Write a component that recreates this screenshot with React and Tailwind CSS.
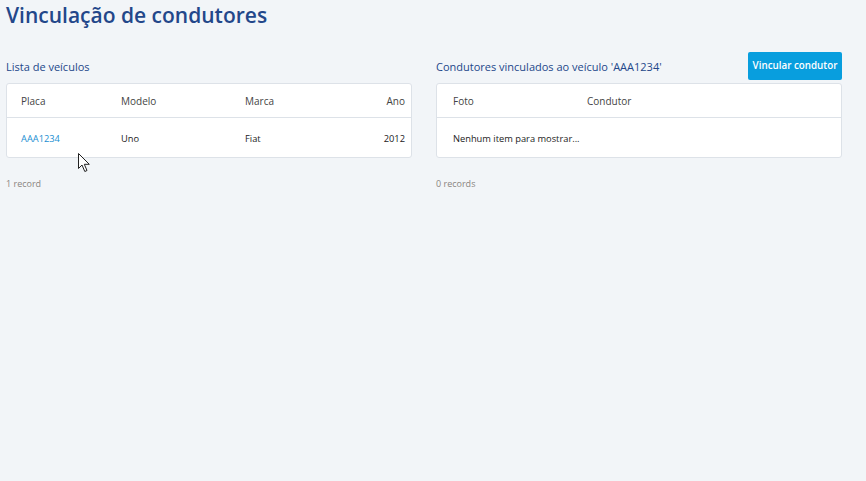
export default function App() {
  return (
    <div
      className="relative min-h-[481px] w-full bg-[#f2f5f8] px-[6px] pt-[1px] text-[#222]"
      style={{ fontFamily: '"Open Sans", "Noto Sans", sans-serif' }}
    >
      <h1 className="text-[21px] font-semibold leading-[28px] text-[#23478a]">
        Vinculação de condutores
      </h1>

      <div className="mt-[23px] mr-[18px] grid grid-cols-2 gap-[24px]">
        {/* Vehicles */}
        <section>
          <div className="flex h-[28px] items-center pt-[2px]">
            <h2 className="text-[11px] text-[#23478a]">Lista de veículos</h2>
          </div>
          <div className="mt-[3px] rounded-[3px] border border-[#dde2e8] bg-white">
            <div className="grid h-[34px] grid-cols-[100px_124px_1fr_auto] items-center border-b border-[#dde2e8] pl-[14px] pr-[6px] pt-[2px] text-[10px] text-[#444]">
              <span>Placa</span>
              <span>Modelo</span>
              <span>Marca</span>
              <span className="text-right">Ano</span>
            </div>
            <div className="grid h-[39px] grid-cols-[100px_124px_1fr_auto] items-center pl-[14px] pr-[6px] pt-[2px] text-[9.3px]">
              <a className="text-[#1b8fd2]">AAA1234</a>
              <span>Uno</span>
              <span>Fiat</span>
              <span className="text-right">2012</span>
            </div>
          </div>
          <p className="mt-[19px] text-[9px] text-[#8a8580]">1 record</p>
        </section>

        {/* Drivers */}
        <section>
          <div className="flex h-[28px] items-center justify-between">
            <h2 className="pt-[2px] text-[11px] text-[#23478a]">
              Condutores vinculados ao veículo 'AAA1234'
            </h2>
            <button className="h-[28px] w-[94px] rounded-[2px] bg-[#089ede] text-[9.8px] font-semibold text-white">
              Vincular condutor
            </button>
          </div>
          <div className="mt-[3px] rounded-[3px] border border-[#dde2e8] bg-white">
            <div className="grid h-[34px] grid-cols-[134px_1fr] items-center border-b border-[#dde2e8] pl-[16px] pt-[2px] text-[10px] text-[#444]">
              <span>Foto</span>
              <span>Condutor</span>
            </div>
            <div className="flex h-[39px] items-center pl-[16px] pt-[2px] text-[9.3px]">
              Nenhum item para mostrar...
            </div>
          </div>
          <p className="mt-[19px] text-[9px] text-[#8a8580]">0 records</p>
        </section>
      </div>

      {/* mouse cursor */}
      <svg
        className="absolute left-[78px] top-[153px]"
        width="13"
        height="20"
        viewBox="0 0 13 20"
      >
        <path
          d="M0.5 0.5 L0.5 15.5 L4 12 L6.8 18.5 L9 17.5 L6.3 11.3 L11.3 11.3 Z"
          fill="white"
          stroke="#222"
          strokeWidth="1"
          strokeLinejoin="round"
        />
      </svg>
    </div>
  );
}
